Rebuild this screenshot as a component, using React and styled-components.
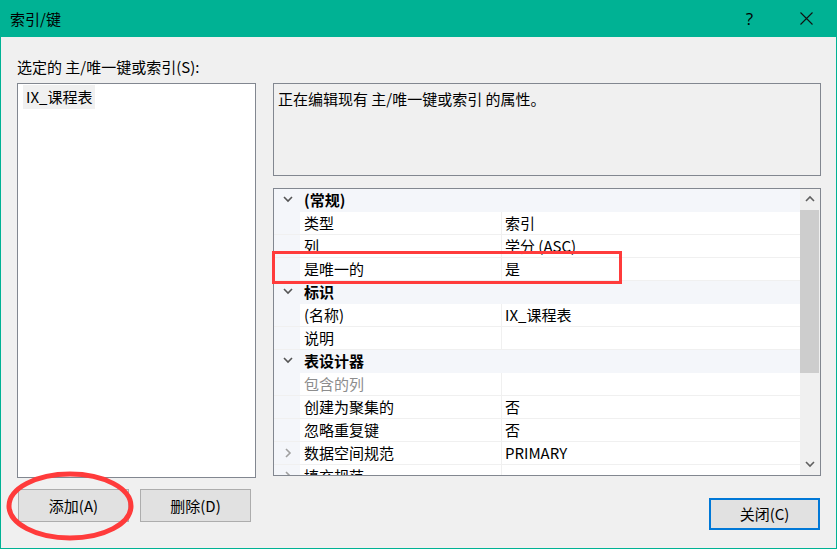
import React from 'react';
import styled, { createGlobalStyle } from 'styled-components';

const GlobalStyle = createGlobalStyle`
  html, body {
    margin: 0;
    padding: 0;
    background: #f0f0f0;
  }
  body {
    font-family: "Noto Sans CJK SC", "Open Sans", sans-serif;
    font-size: 15px;
    color: #000;
  }
`;

const Window = styled.div`
  position: relative;
  width: 837px;
  height: 549px;
  display: flex;
  flex-direction: column;
  background: #f0f0f0;
  overflow: hidden;
`;

const TitleBar = styled.div`
  height: 37px;
  flex: none;
  display: flex;
  align-items: center;
  background: #00b294;
  padding-left: 10px;
`;

const Title = styled.div`
  flex: 1;
  font-size: 15px;
  line-height: 20px;
`;

const CaptionButton = styled.div`
  width: 57px;
  height: 37px;
  display: flex;
  align-items: center;
  justify-content: center;
  font-family: "Open Sans", sans-serif;
  font-size: 17px;
  &:last-child {
    margin-right: 2px;
  }
`;

const Body = styled.div`
  flex: 1;
  display: flex;
  flex-direction: column;
  border: 1px solid #00b294;
  border-top: none;
  padding: 20px 15px 0 16px;
`;

const Label = styled.div`
  height: 20px;
  line-height: 20px;
  margin-bottom: 6px;
`;

const Columns = styled.div`
  display: flex;
  gap: 17px;
`;

const LeftColumn = styled.div`
  width: 239px;
  display: flex;
  flex-direction: column;
`;

const RightColumn = styled.div`
  width: 548px;
  display: flex;
  flex-direction: column;
`;

const ListBox = styled.div`
  height: 395px;
  box-sizing: border-box;
  background: #fff;
  border: 1px solid #828790;
  padding: 1px 5px;
`;

const ListItem = styled.div`
  display: inline-block;
  height: 24px;
  line-height: 24px;
  padding: 0 3px;
  background: ${({ selected }) => (selected ? '#f0f0f0' : 'transparent')};
`;

const ButtonRow = styled.div`
  display: flex;
  gap: 11px;
  margin-top: 11px;
  padding-left: 1px;
`;

const Button = styled.button`
  width: 111px;
  height: ${({ primary }) => (primary ? '32px' : '33px')};
  box-sizing: border-box;
  font-family: inherit;
  font-size: 15px;
  color: #000;
  background: #e1e1e1;
  border: ${({ primary }) => (primary ? '2px solid #0078d7' : '1px solid #adadad')};
  padding: 0;
  line-height: 20px;
`;

const Description = styled.div`
  height: 93px;
  box-sizing: border-box;
  border: 1px solid #828790;
  padding: 5px 4px;
  line-height: 20px;
`;

const Grid = styled.div`
  height: 288px;
  margin-top: 12px;
  box-sizing: border-box;
  border: 1px solid #828790;
  display: flex;
  overflow: hidden;
  background: #f4f6fa;
`;

const Rows = styled.div`
  flex: 1;
  display: flex;
  flex-direction: column;
`;

const Row = styled.div`
  height: 23px;
  flex: none;
  box-sizing: border-box;
  display: flex;
  border-bottom: 1px solid ${({ category }) => (category ? '#f4f6fa' : '#f0f0f0')};
`;

const Gutter = styled.div`
  width: 25px;
  flex: none;
  display: flex;
  align-items: center;
  justify-content: center;
  padding-left: 1px;
`;

const CategoryName = styled.div`
  flex: 1;
  font-weight: bold;
  line-height: 22px;
  padding-left: 4px;
`;

const NameCell = styled.div`
  width: 201px;
  flex: none;
  background: #fff;
  line-height: 22px;
  padding-left: 4px;
  box-sizing: border-box;
  color: ${({ disabled }) => (disabled ? '#8d8d8d' : '#000')};
`;

const ValueCell = styled.div`
  flex: 1;
  background: #fff;
  border-left: 1px solid #f0f0f0;
  line-height: 22px;
  padding-left: 3px;
`;

const ScrollBar = styled.div`
  width: 20px;
  flex: none;
  display: flex;
  flex-direction: column;
  background: #f0f0f0;
`;

const ScrollArrow = styled.div`
  height: 21px;
  flex: none;
  display: flex;
  align-items: center;
  justify-content: center;
`;

const ScrollThumb = styled.div`
  height: 163px;
  flex: none;
  margin: 0 1px 0 0;
  background: #cdcdcd;
`;

const ScrollTrack = styled.div`
  flex: 1;
`;

const CloseRow = styled.div`
  display: flex;
  justify-content: flex-end;
  margin-top: 22px;
  padding-right: 1px;
`;

const RedRect = styled.div`
  position: absolute;
  left: 272px;
  top: 251px;
  width: 350px;
  height: 33px;
  box-sizing: border-box;
  border: 3px solid #ff3b3b;
  pointer-events: none;
`;

const RedEllipse = styled.svg`
  position: absolute;
  left: 0;
  top: 466px;
  pointer-events: none;
`;

const Chevron = ({ dir = 'down', color = '#555' }) => {
  const paths = {
    down: 'M1 2 L5 6 L9 2',
    up: 'M1 6 L5 2 L9 6',
    right: 'M3 1 L7 5 L3 9',
  };
  return (
    <svg width="10" height="10" viewBox="0 0 10 10">
      <path d={paths[dir]} fill="none" stroke={color} strokeWidth="1.6" />
    </svg>
  );
};

const rows = [
  { category: '(常规)' },
  { name: '类型', value: '索引' },
  { name: '列', value: '学分 (ASC)' },
  { name: '是唯一的', value: '是' },
  { category: '标识' },
  { name: '(名称)', value: 'IX_课程表' },
  { name: '说明', value: '' },
  { category: '表设计器' },
  { name: '包含的列', value: '', disabled: true },
  { name: '创建为聚集的', value: '否' },
  { name: '忽略重复键', value: '否' },
  { name: '数据空间规范', value: 'PRIMARY', expandable: true },
  { name: '填充规范', value: '', expandable: true },
];

export default function App() {
  return (
    <>
      <GlobalStyle />
      <Window>
        <TitleBar>
          <Title>索引/键</Title>
          <CaptionButton>?</CaptionButton>
          <CaptionButton>
            <svg width="13" height="13" viewBox="0 0 13 13">
              <path d="M0.5 0.5 L12.5 12.5 M12.5 0.5 L0.5 12.5" stroke="#111" strokeWidth="1.1" />
            </svg>
          </CaptionButton>
        </TitleBar>
        <Body>
          <Label>选定的 主/唯一键或索引(S):</Label>
          <Columns>
            <LeftColumn>
              <ListBox>
                <ListItem selected>IX_课程表</ListItem>
              </ListBox>
              <ButtonRow>
                <Button>添加(A)</Button>
                <Button>删除(D)</Button>
              </ButtonRow>
            </LeftColumn>
            <RightColumn>
              <Description>正在编辑现有 主/唯一键或索引 的属性。</Description>
              <Grid>
                <Rows>
                  {rows.map((r, i) =>
                    r.category ? (
                      <Row key={i} category>
                        <Gutter>
                          <Chevron dir="down" />
                        </Gutter>
                        <CategoryName>{r.category}</CategoryName>
                      </Row>
                    ) : (
                      <Row key={i}>
                        <Gutter>{r.expandable && <Chevron dir="right" color="#a0a0a0" />}</Gutter>
                        <NameCell disabled={r.disabled}>{r.name}</NameCell>
                        <ValueCell>{r.value}</ValueCell>
                      </Row>
                    )
                  )}
                </Rows>
                <ScrollBar>
                  <ScrollArrow>
                    <Chevron dir="up" color="#606060" />
                  </ScrollArrow>
                  <ScrollThumb />
                  <ScrollTrack />
                  <ScrollArrow>
                    <Chevron dir="down" color="#606060" />
                  </ScrollArrow>
                </ScrollBar>
              </Grid>
              <CloseRow>
                <Button primary>关闭(C)</Button>
              </CloseRow>
            </RightColumn>
          </Columns>
        </Body>
        <RedRect />
        <RedEllipse width="150" height="83" viewBox="0 0 150 83">
          <ellipse cx="70" cy="40" rx="61" ry="32" fill="none" stroke="#ff3b3b" strokeWidth="5" />
        </RedEllipse>
      </Window>
    </>
  );
}
